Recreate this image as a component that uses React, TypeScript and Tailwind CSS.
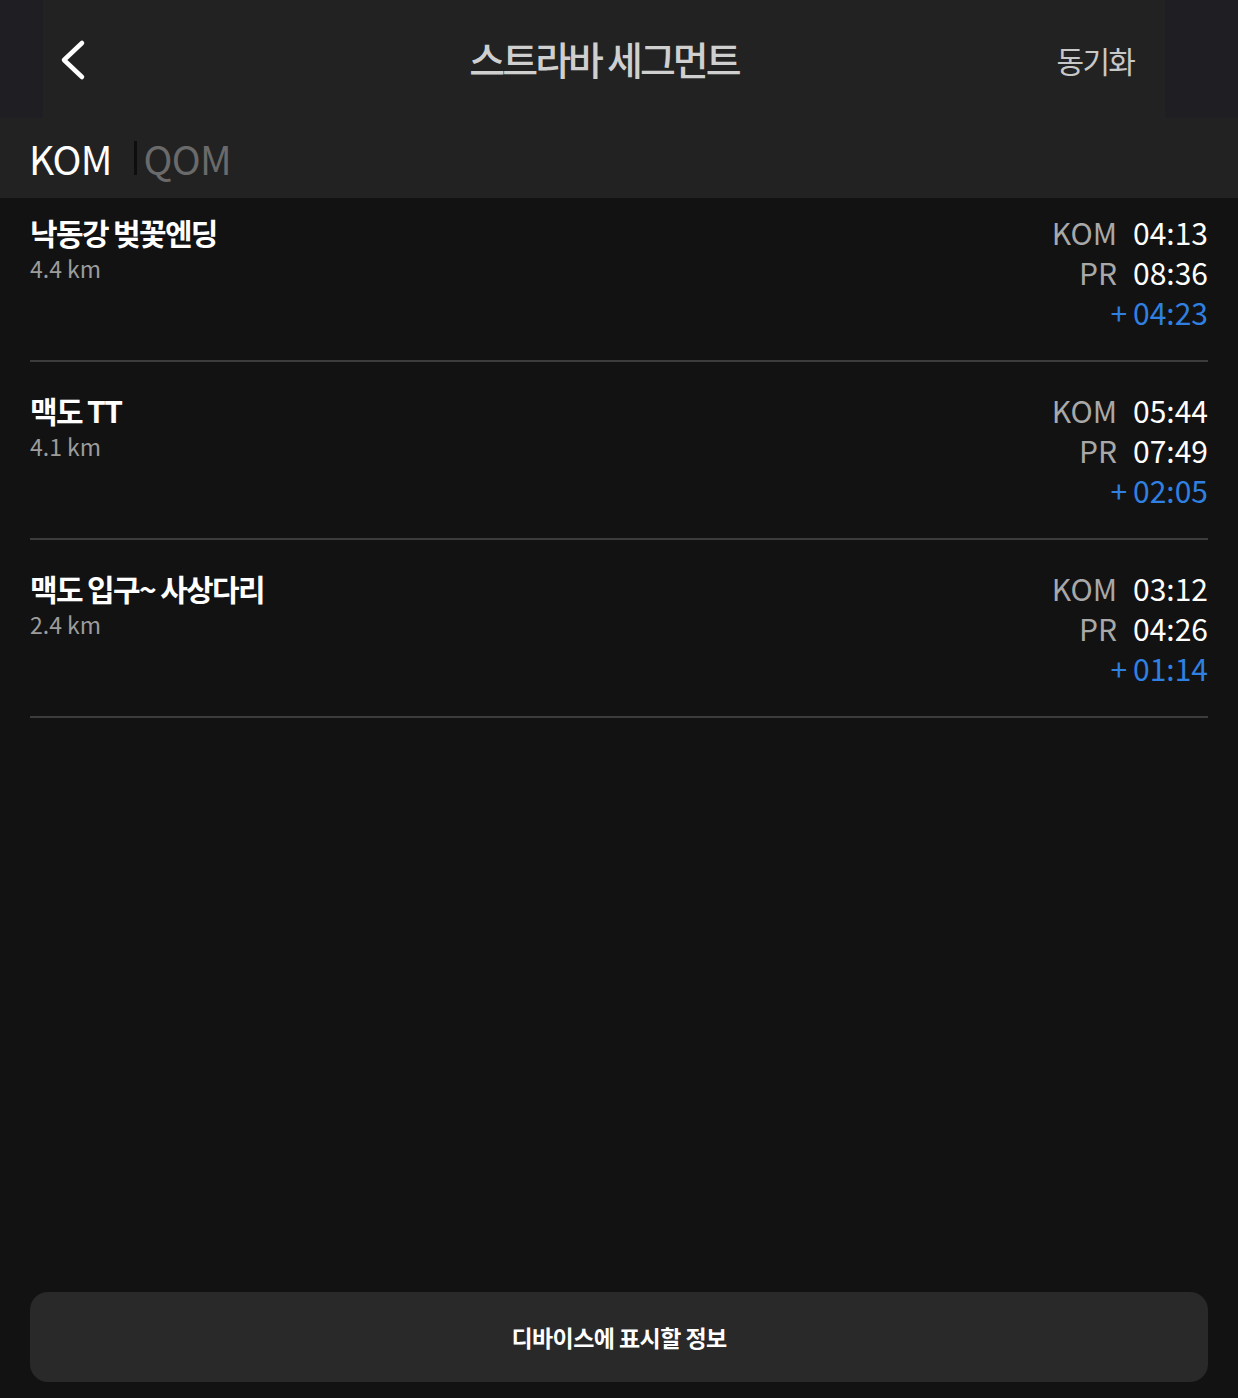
import React from "react";

const FONT = { fontFamily: '"Noto Sans CJK KR", "Noto Sans", sans-serif' };

type Seg = { name: string; dist: string; kom: string; pr: string; diff: string };

const segs: Seg[] = [
  { name: "낙동강 벚꽃엔딩", dist: "4.4 km", kom: "04:13", pr: "08:36", diff: "04:23" },
  { name: "맥도 TT", dist: "4.1 km", kom: "05:44", pr: "07:49", diff: "02:05" },
  { name: "맥도 입구~ 사상다리", dist: "2.4 km", kom: "03:12", pr: "04:26", diff: "01:14" },
];

export default function App() {
  return (
    <div style={FONT} className="min-h-[1398px] w-[1238px] bg-[#121212] flex flex-col">
      <div className="h-[118px] flex bg-[#222222]">
        <div className="w-[43px] bg-[#1f1f23]" />
        <div className="flex-1 relative flex items-center justify-center">
          <div className="absolute left-[15px] top-[39px]">
            <svg width="30" height="42" viewBox="0 0 30 42" fill="none">
              <path d="M24 4 L6 21 L24 38" stroke="white" strokeWidth="4.5" strokeLinecap="round" strokeLinejoin="round" />
            </svg>
          </div>
          <div className="text-[39px] font-medium text-[#cfcfcf] tracking-[-0.075em] leading-none pb-[2px]">스트라바 세그먼트</div>
          <div className="absolute right-[31px] top-[40px] text-[30px] text-[#c8c8c8] tracking-[-0.06em] leading-[40px]">동기화</div>
        </div>
        <div className="w-[73px] bg-[#1f1f23]" />
      </div>
      <div className="h-[80px] bg-[#222222] flex items-center pl-[29px]">
        <span className="text-[39px] text-white leading-none tracking-[-0.02em]">KOM</span>
        <span className="ml-[22px] w-[3px] h-[34px] bg-[#0e0e0e]" />
        <span className="ml-[7px] text-[39px] text-[#6a6a6a] leading-none tracking-[-0.02em]">QOM</span>
      </div>
      <div className="px-[30px]">
        {segs.map((s, i) => (
          <div
            key={s.name}
            className={
              "border-b-2 border-[#3c3c3c] " + (i === 0 ? "pt-[14px]" : "pt-[28px]")
            }
          >
            <div className="h-[148px] flex justify-between">
              <div>
                <div className="text-[30px] font-bold text-white leading-[40px] tracking-[-0.055em]">{s.name}</div>
                <div className="text-[23px] text-[#9c9c9c] leading-[32px]">{s.dist}</div>
              </div>
              <div className="flex flex-col items-end text-[30px] leading-[40px]">
                <div>
                  <span className="text-[#a8a8a8]">KOM</span>
                  <span className="ml-[16px] text-white">{s.kom}</span>
                </div>
                <div>
                  <span className="text-[#a8a8a8]">PR</span>
                  <span className="ml-[16px] text-white">{s.pr}</span>
                </div>
                <div className="text-[#2f80e0]">
                  <span>+</span>
                  <span className="ml-[6px]">{s.diff}</span>
                </div>
              </div>
            </div>
          </div>
        ))}
      </div>
      <div className="flex-1" />
      <div className="px-[30px] pb-[16px]">
        <div className="h-[90px] rounded-[18px] bg-[#292929] flex items-center justify-center">
          <span className="text-[23px] font-bold text-white tracking-[-0.025em]">디바이스에 표시할 정보</span>
        </div>
      </div>
    </div>
  );
}
